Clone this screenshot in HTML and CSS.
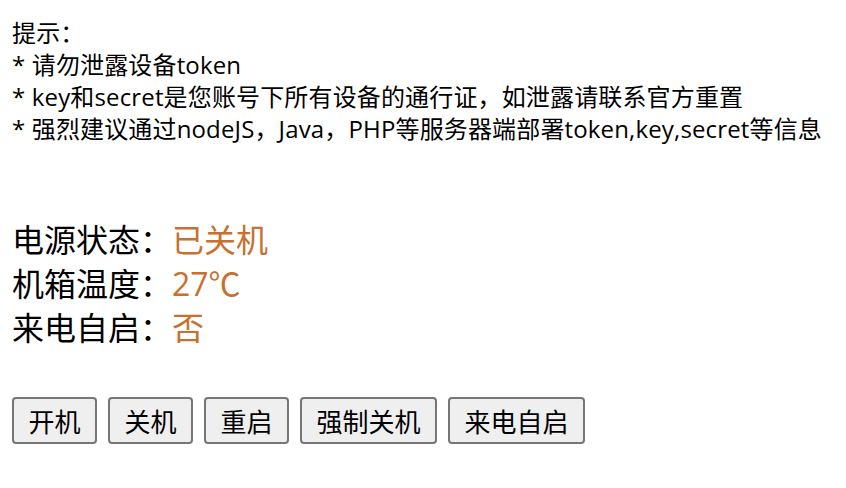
FILE: index.html
```html
<!DOCTYPE html>
<html lang="zh">
<head>
<meta charset="utf-8">
<link rel="stylesheet" href="styles.css">
</head>
<body>
<div class="page">
  <div class="tips">
    <div>提示：</div>
    <div>* 请勿泄露设备token</div>
    <div>* key和secret是您账号下所有设备的通行证，如泄露请联系官方重置</div>
    <div>* 强烈建议通过nodeJS，Java，PHP等服务器端部署token,key,secret等信息</div>
  </div>
  <div class="status">
    <div class="row"><span class="label">电源状态：</span><span class="value">已关机</span></div>
    <div class="row"><span class="label">机箱温度：</span><span class="value">27℃</span></div>
    <div class="row"><span class="label">来电自启：</span><span class="value">否</span></div>
  </div>
  <div class="actions">
    <button class="btn">开机</button>
    <button class="btn">关机</button>
    <button class="btn">重启</button>
    <button class="btn">强制关机</button>
    <button class="btn">来电自启</button>
  </div>
</div>
</body>
</html>
```
FILE: styles.css
```css
html, body {
  margin: 0;
  padding: 0;
  background: #ffffff;
}
body {
  font-family: "Open Sans", "Noto Sans CJK SC", sans-serif;
  color: #000000;
}
.page {
  padding: 17px 12px 0 12px;
  display: flex;
  flex-direction: column;
}
.tips {
  font-size: 24px;
  line-height: 32px;
  letter-spacing: 0.15px;
}
.status {
  margin-top: 73px;
  font-size: 32px;
  line-height: 44px;
}
.value {
  color: #c8702f;
}
.actions {
  margin-top: 47px;
  display: flex;
  gap: 11px;
}
.btn {
  font-family: "Noto Sans CJK SC", sans-serif;
  font-size: 26px;
  height: 47px;
  padding: 0 14.5px;
  border: 2px solid #767676;
  border-radius: 4px;
  background: #efefef;
  color: #000;
  line-height: 1;
}
```
